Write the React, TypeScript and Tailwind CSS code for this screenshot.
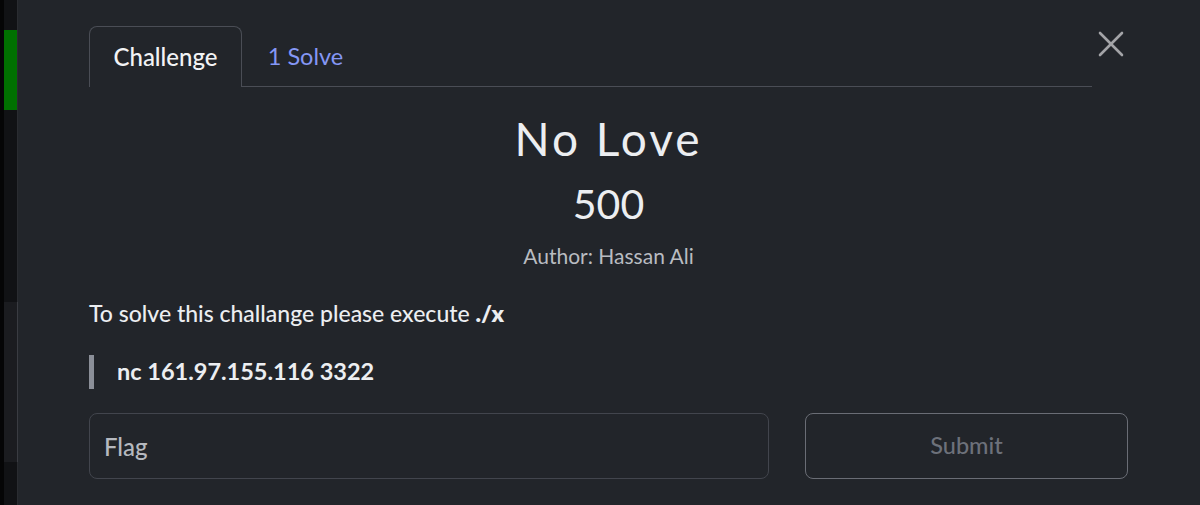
import React, { useState } from 'react';

const App: React.FC = () => {
  const [tab, setTab] = useState<'challenge' | 'solves'>('challenge');
  const [flag, setFlag] = useState<string>('');

  return (
    <div className="flex h-[505px] w-[1200px] overflow-hidden bg-[#22252a] font-['Lato','Liberation_Sans',sans-serif]">
      {/* left edge of the page behind the modal */}
      <div className="flex h-full w-[18px] shrink-0">
        <div className="h-full w-[4px] bg-[#050506]" />
        <div className="flex h-full w-[13px] flex-col bg-[#111215]">
          <div className="h-[30px]" />
          <div className="h-[80px] bg-[#007000]" />
          <div className="h-[192px]" />
          <div className="h-[160px] bg-[#1b1c20]" />
        </div>
        <div className="flex h-full w-[1px] flex-col bg-[#2a2c31]">
          <div className="h-[302px]" />
          <div className="h-[160px] bg-[#3a3c42]" />
        </div>
      </div>

      {/* modal body */}
      <div className="flex-1 pl-[71px] pr-[72px] pt-[26px]">
        <div className="flex">
          <div className="flex flex-1 border-b border-[#4a4d55]">
            <button
              onClick={() => setTab('challenge')}
              className={
                tab === 'challenge'
                  ? 'mb-[-1px] h-[61px] w-[153px] rounded-t-[8px] border border-b-0 border-[#4a4d55] bg-[#22252a] text-[24px] font-medium text-[#f2f3f5]'
                  : 'mb-[-1px] h-[61px] w-[153px] text-[24px] text-[#8597f5]'
              }
            >
              Challenge
            </button>
            <button
              onClick={() => setTab('solves')}
              className={
                tab === 'solves'
                  ? 'mb-[-1px] h-[61px] w-[127px] rounded-t-[8px] border border-b-0 border-[#4a4d55] bg-[#22252a] text-[23.5px] text-[#f2f3f5]'
                  : 'mb-[-1px] h-[61px] w-[127px] text-[23.5px] text-[#8597f5]'
              }
            >
              1 Solve
            </button>
          </div>
          <button className="ml-[2px] flex h-[36px] w-[34px] items-center justify-center" aria-label="Close">
            <svg width="28" height="28" viewBox="0 0 28 28" fill="none" stroke="#a3a4a7" strokeWidth="2.6" strokeLinecap="round">
              <path d="M3 3 L25 25" />
              <path d="M25 3 L3 25" />
            </svg>
          </button>
        </div>

        <div className="flex flex-col items-center">
          <h3 className="mt-[24px] text-[46px] leading-[56px] tracking-[3px] text-[#eceef1]">No Love</h3>
          <div className="mt-[13px] text-[41px] leading-[48px] text-[#eceef1]">500</div>
          <div className="mt-[14px] text-[21px] leading-[28px] text-[#b9bcc1]">Author: Hassan Ali</div>
        </div>

        <p className="mt-[27px] text-[23px] font-medium leading-[32px] text-[#eceef1]">
          To solve this challange please execute <strong className="font-extrabold">./x</strong>
        </p>

        <blockquote className="mt-[26px] flex h-[34px] items-center border-l-[5px] border-[#8b8f98] pl-[23px] text-[23.5px] font-bold text-[#eceef1]">
          nc 161.97.155.116 3322
        </blockquote>

        <div className="mt-[24px] flex gap-[36px]">
          <input
            value={flag}
            onChange={(e) => setFlag(e.target.value)}
            placeholder="Flag"
            className="h-[66px] flex-1 rounded-[8px] border border-[#42454d] bg-[#22252a] px-[14px] text-[24px] font-medium text-[#eceef1] outline-none placeholder:text-[#b6b9bf]"
          />
          <button className="h-[66px] w-[323px] rounded-[8px] border border-[#6a6d75] text-[23.5px] font-medium text-[#6d717a]">
            Submit
          </button>
        </div>
      </div>
    </div>
  );
};

export default App;
